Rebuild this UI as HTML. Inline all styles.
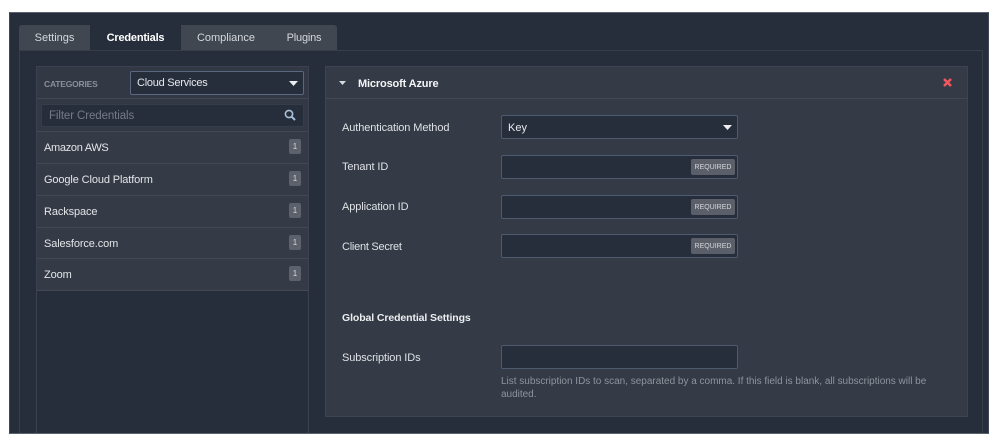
<!DOCTYPE html>
<html><head><meta charset="utf-8">
<style>
html,body{margin:0;padding:0;background:#fff;width:999px;height:448px;overflow:hidden}
*{box-sizing:border-box}
body{font-family:"Liberation Sans",sans-serif;font-size:11px;color:#dfe2e6;position:relative}
.a{position:absolute;white-space:nowrap}
.t{line-height:16px;height:16px}
.in{position:absolute;left:501px;width:237px;height:24px;background:#272e3b;border:1px solid #4e5a6e;border-radius:2px}
.req{position:absolute;left:691px;width:44px;height:16px;background:#5a5f69;border-radius:2px;color:#d5d8dc;font-size:7px;line-height:17px;text-align:center}
.row{position:absolute;left:37px;width:271px;height:32px;background:#343a46;border-bottom:1px solid #424854}
.row span{position:absolute;left:7px;top:8px;line-height:16px;font-size:11px;letter-spacing:-.12px;color:#e3e5e8}
.row b{position:absolute;left:252px;top:7px;width:12px;height:15px;background:#5c616b;border-radius:2px;color:#d5d8dc;font-size:8px;line-height:15px;text-align:center;font-weight:normal}
.lb{left:342px;letter-spacing:-.1px;font-size:11px;color:#dfe2e6}
.tab{position:absolute;top:25px;height:25px;line-height:25px;padding-top:1px;text-align:center;background:#414751;color:#d5d8dc;font-size:11px}
</style></head><body>
<div class="a" style="left:9px;top:12px;width:980px;height:422px;background:#272e3b;border-top:1px solid #5a6270;border-bottom:1px solid #5a6270;border-left:1px solid #3d4656;border-right:1px solid #3d4656"></div>
<div class="a" style="left:19px;top:50px;width:964px;height:383px;border:1px solid #373e4b;border-bottom:0"></div>

<div class="tab" style="left:19px;width:71px;border-radius:3px 0 0 0">Settings</div>
<div class="tab" style="left:90px;width:91px;background:#272e3b;color:#fff;font-weight:bold;letter-spacing:-.2px">Credentials</div>
<div class="tab" style="left:181px;width:90px">Compliance</div>
<div class="tab" style="left:271px;width:66px;border-radius:0 3px 0 0;letter-spacing:-.2px">Plugins</div>

<!-- left panel -->
<div class="a" style="left:36px;top:66px;width:273px;height:367px;border:1px solid #3b414e;border-bottom:0;background:#272e3b"></div>
<div class="a" style="left:37px;top:67px;width:271px;height:32px;background:#323844;border-bottom:1px solid #424854"></div>
<div class="a" style="left:37px;top:99px;width:271px;height:33px;background:#323844;border-bottom:1px solid #424854"></div>
<div class="a t" style="left:44px;top:76px;font-size:8.5px;font-weight:bold;color:#8b9099;letter-spacing:-.2px">CATEGORIES</div>
<div class="a" style="left:130px;top:71px;width:174px;height:24px;background:#272e3b;border:1px solid #5a6780;border-radius:2px"></div>
<div class="a t" style="left:137px;top:75px;letter-spacing:-.25px;color:#e6e8eb;line-height:17px">Cloud Services</div>
<svg class="a" style="left:289px;top:81px" width="9" height="5"><path d="M0 0H9L4.5 5Z" fill="#eceef0"/></svg>
<div class="a" style="left:41px;top:104px;width:263px;height:23px;background:#272e3b;border:1px solid #363d4a;border-radius:2px"></div>
<div class="a t" style="left:49px;top:108px;color:#757b85;letter-spacing:-.1px;font-size:11.5px">Filter Credentials</div>
<svg class="a" style="left:284px;top:109px" width="12" height="12" viewBox="0 0 12 12"><circle cx="5" cy="5" r="3.6" fill="none" stroke="#a8c0dc" stroke-width="1.6"/><path d="M7.8 7.8L11 11" stroke="#a8c0dc" stroke-width="2"/></svg>

<div class="row" style="top:132px"><span style="letter-spacing:-.3px">Amazon AWS</span><b>1</b></div>
<div class="row" style="top:164px"><span>Google Cloud Platform</span><b>1</b></div>
<div class="row" style="top:196px"><span>Rackspace</span><b>1</b></div>
<div class="row" style="top:228px;height:31px"><span>Salesforce.com</span><b>1</b></div>
<div class="row" style="top:259px"><span>Zoom</span><b>1</b></div>

<!-- right panel -->
<div class="a" style="left:325px;top:66px;width:643px;height:351px;background:#343a46;border:1px solid #3d4350"></div>
<div class="a" style="left:326px;top:98px;width:641px;height:1px;background:#424854"></div>
<svg class="a" style="left:339px;top:81px" width="7" height="4"><path d="M0 0H7L3.5 4Z" fill="#d8dade"/></svg>
<div class="a t" style="left:358px;top:76px;font-weight:bold;letter-spacing:-.15px;color:#f4f5f6">Microsoft Azure</div>
<svg class="a" style="left:943px;top:78px" width="9" height="9" viewBox="0 0 9 9"><path d="M1 1L8 8M8 1L1 8" stroke="#f0585f" stroke-width="2.6"/></svg>

<div class="a t lb" style="top:120px">Authentication Method</div>
<div class="in" style="top:115px"></div>
<div class="a t" style="left:508px;top:120px;color:#e6e8eb">Key</div>
<svg class="a" style="left:723px;top:125px" width="9" height="5"><path d="M0 0H9L4.5 5Z" fill="#eceef0"/></svg>

<div class="a t lb" style="top:159px">Tenant ID</div>
<div class="in" style="top:155px"></div><div class="req" style="top:159px">REQUIRED</div>
<div class="a t lb" style="top:199px">Application ID</div>
<div class="in" style="top:195px"></div><div class="req" style="top:199px">REQUIRED</div>
<div class="a t lb" style="top:239px;letter-spacing:-.25px">Client Secret</div>
<div class="in" style="top:234px"></div><div class="req" style="top:238px">REQUIRED</div>

<div class="a t" style="left:342px;top:310px;font-weight:bold;font-size:10.5px;letter-spacing:-.1px;color:#eceef0">Global Credential Settings</div>
<div class="a t lb" style="top:350px">Subscription IDs</div>
<div class="in" style="top:345px"></div>
<div class="a" style="left:501px;top:375px;width:440px;font-size:10px;line-height:13px;letter-spacing:-.01px;color:#8f949c;white-space:normal">List subscription IDs to scan, separated by a comma. If this field is blank, all subscriptions will be audited.</div>
</body></html>
